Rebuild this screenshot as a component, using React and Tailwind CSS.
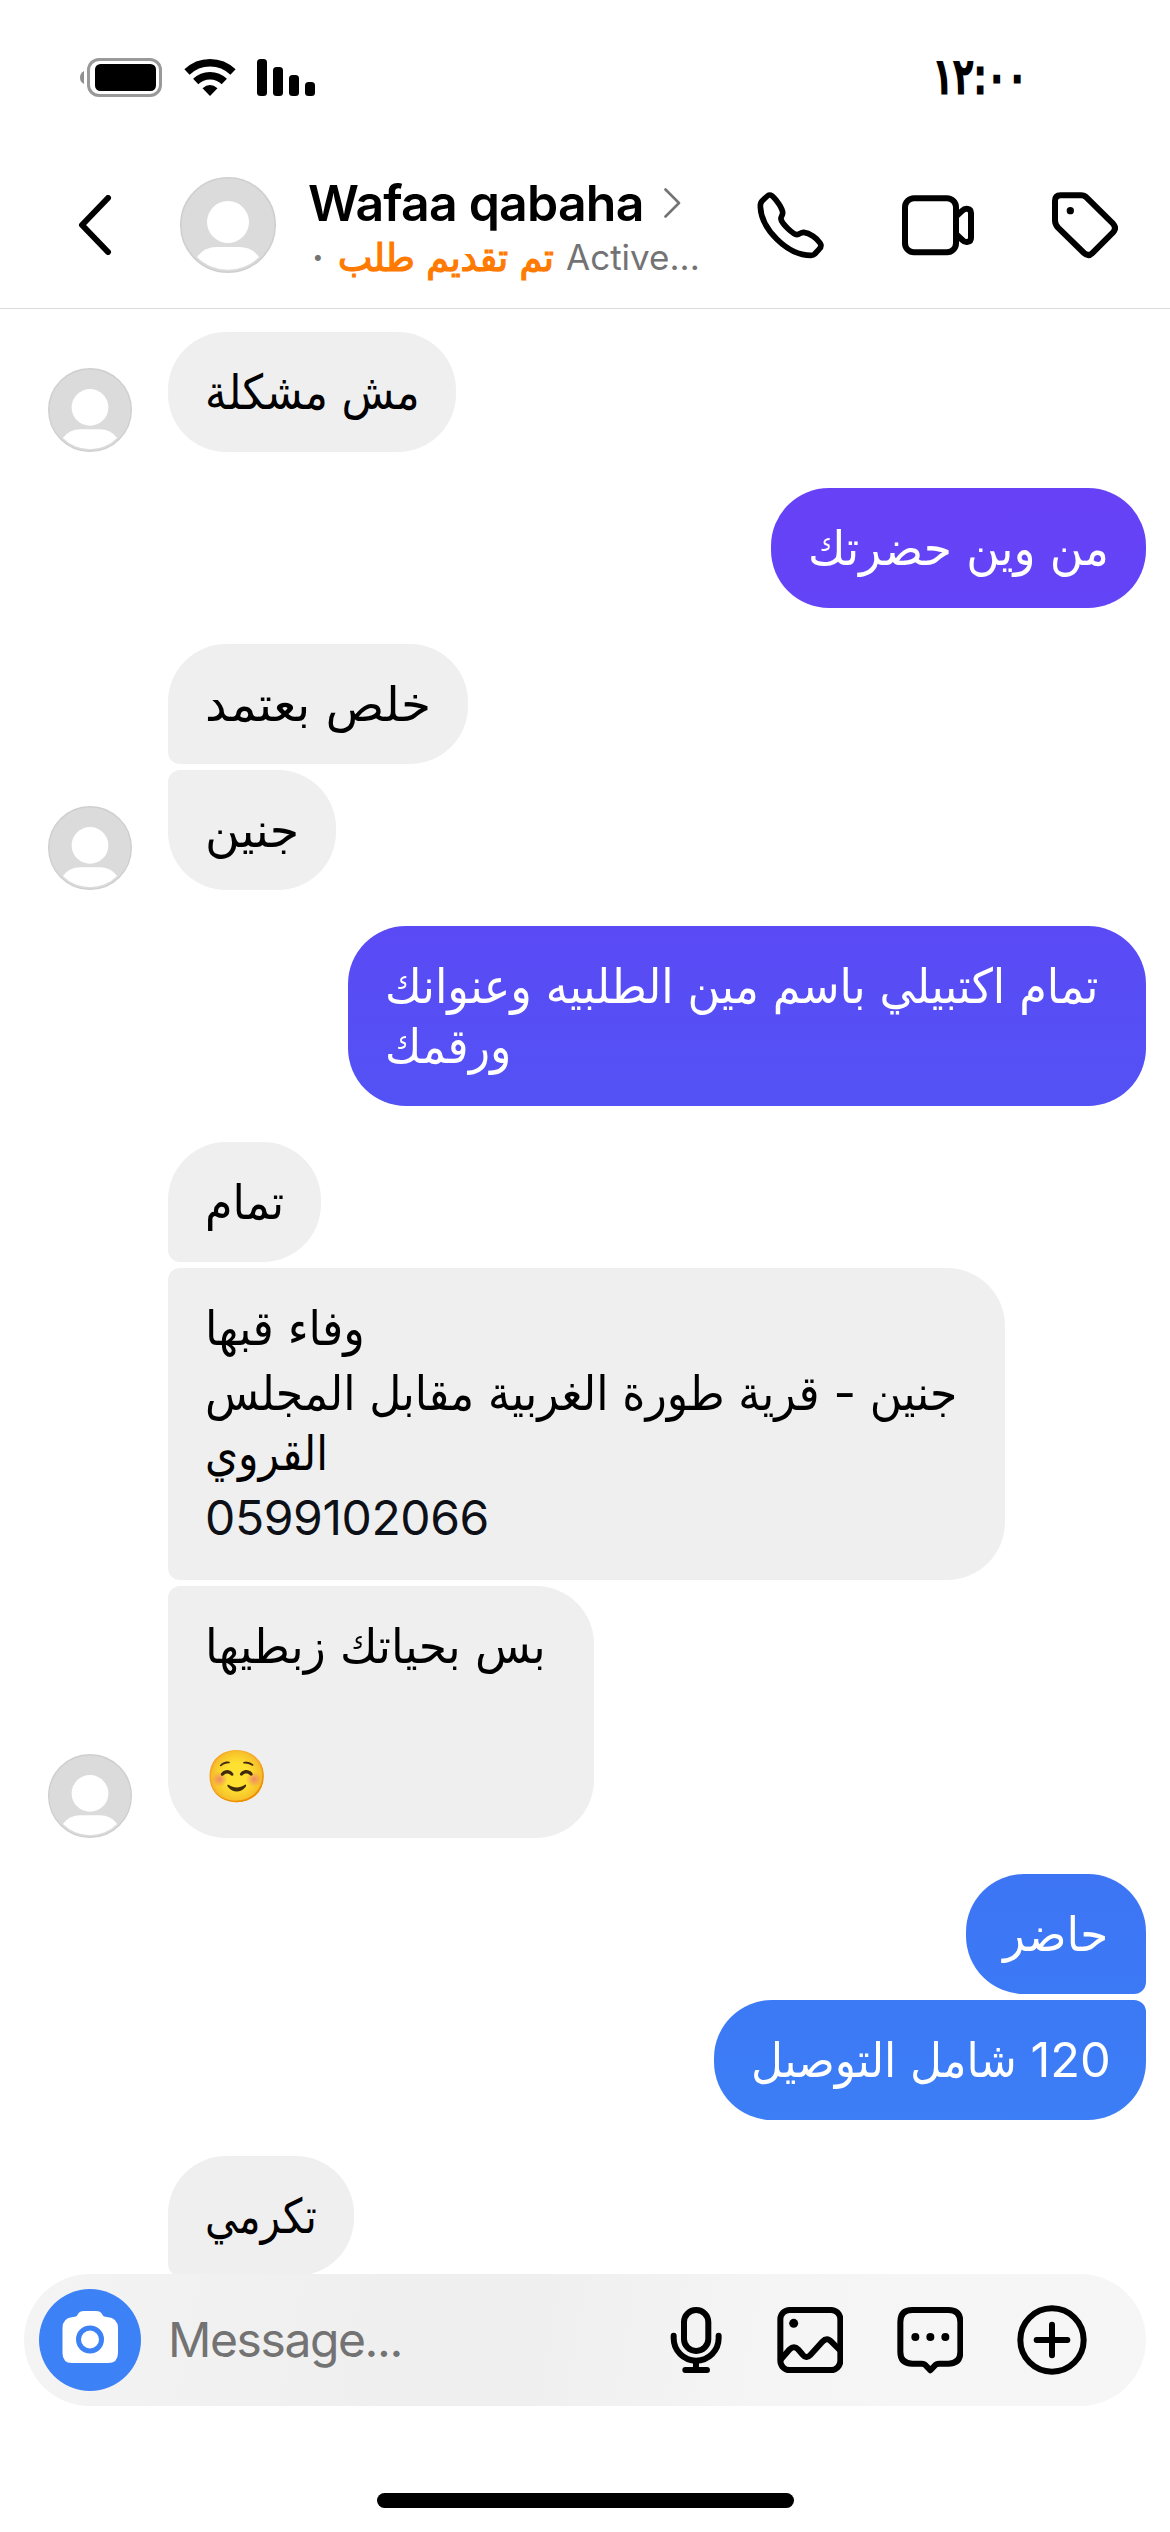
import clsx from 'clsx'

// `more` = the group goes on below the fold, so its last bubble keeps a tight corner
const THREAD = [
  { me: false, avatar: true, items: [
    { box: 'w-[288px] h-[120px]', lines: [{ t: 'مش مشكلة' }] },
  ] },
  { me: true, items: [
    { box: 'w-[375px] h-[120px] bg-linear-to-b from-[#6741f6] to-[#6344f6]', lines: [{ t: 'من وين حضرتك', fit: 'scale-x-[1.055]' }] },
  ] },
  { me: false, avatar: true, items: [
    { box: 'w-[300px] h-[120px]', lines: [{ t: 'خلص بعتمد', fit: 'scale-x-[1.125]' }] },
    { box: 'w-[168px] h-[120px]', lines: [{ t: 'جنين', fit: 'scale-x-[1.1]' }] },
  ] },
  { me: true, items: [
    { box: 'w-[798px] h-[180px] bg-linear-to-b from-[#5a4af5] to-[#5352f5]', lines: [
      { t: 'تمام اكتبيلي باسم مين الطلبيه وعنوانك', fit: 'scale-x-[1.031]' },
      { t: 'ورقمك', fit: 'scale-x-[1.02]' },
    ] },
  ] },
  { me: false, avatar: true, items: [
    { box: 'w-[153px] h-[120px]', lines: [{ t: 'تمام', fit: 'scale-x-[1.03]' }] },
    { box: 'w-[837px] h-[312px]', lines: [
      { t: 'وفاء قبها', cls: 'mb-[5px]', fit: 'scale-x-[1.03]' },
      { t: 'جنين - قرية طورة الغربية مقابل المجلس', fit: 'scale-x-[1.021]' },
      { t: 'القروي', cls: 'mb-[5px]', fit: 'scale-x-[0.98]' },
      { t: '0599102066', cls: 'text-[#0d1117] tracking-[-0.4px]' },
    ] },
    { box: 'w-[426px] h-[252px]', lines: [
      { t: 'بس بحياتك زبطيها', cls: 'mb-[70px]', fit: 'scale-x-[1.055]' },
      { t: '☺️', cls: 'text-[51px]' },
    ] },
  ] },
  { me: true, items: [
    { box: 'w-[180px] h-[120px] bg-linear-to-b from-[#3d75f5] to-[#3c79f5]', lines: [{ t: 'حاضر', fit: 'scale-x-[1.05]' }] },
    { box: 'w-[432px] h-[120px] bg-linear-to-b from-[#3c79f5] to-[#3c7ef6]', lines: [{ t: '120 شامل التوصيل', fit: 'scale-x-[1.016]' }] },
  ] },
  { me: false, more: true, items: [
    { box: 'w-[186px] h-[120px]', lines: [{ t: 'تكرمي', fit: 'scale-x-[0.94]' }] },
  ] },
]

function Avatar({ size }) {
  return (
    <svg viewBox="0 0 96 96" width={size} height={size} className="shrink-0">
      <circle cx="48" cy="48" r="47.2" fill="#dbdbdb" stroke="#cfcfcf" strokeWidth="1.6" />
      <circle cx="48" cy="45" r="21" fill="#fff" />
      <path d="M17 80Q24 70 37 70H59Q72 70 79 80A44 44 0 0 1 17 80Z" fill="#fff" />
    </svg>
  )
}

function Icon({ box, w, h, sw = 18, children }) {
  return (
    <svg viewBox={box} width={w} height={h} className="shrink-0" fill="none" stroke="#000"
      strokeWidth={sw} strokeLinecap="round" strokeLinejoin="round">
      {children}
    </svg>
  )
}

function StatusBar() {
  return (
    <div className="h-[141px] flex items-start justify-between pt-[57px] pl-[80px] pr-[143px]">
      <svg width="236" height="42" viewBox="80 57 236 42">
        <path d="M84 71Q80 73 80 77.500Q80 82 84 84Z" fill="#8f8f8f" />
        <rect x="88.500" y="59.500" width="72" height="36" rx="10.500" fill="none" stroke="#999" strokeWidth="3" />
        <rect x="95" y="64" width="61" height="27" rx="5.500" />
        <g fill="none" stroke="#000" strokeWidth="7.500">
          <path d="M187 72A33 33 0 0 1 233 72" />
          <path d="M195.700 81.500A20.500 20.500 0 0 1 224.300 81.500" />
        </g>
        <path d="M210 96L202.500 88.300Q210 81.500 217.500 88.300Z" />
        <rect x="257" y="59" width="10" height="37" rx="3.500" />
        <rect x="273" y="67" width="10" height="29" rx="3.500" />
        <rect x="289" y="75" width="10" height="21" rx="3.500" />
        <rect x="305" y="82" width="10" height="14" rx="3.500" />
      </svg>
      <p className="font-['DejaVu_Sans_Condensed','DejaVu_Sans',sans-serif] text-[48px] leading-[39px] tracking-[-5px] whitespace-nowrap origin-right scale-x-[0.88] [-webkit-text-stroke:3px_#000]">١٢:٠٠</p>
    </div>
  )
}

function Header() {
  return (
    <header className="h-[168px] flex items-start border-b border-[#dbdbdb] pl-[78px]">
      <div className="w-[102px] pt-[54px]">
        <Icon box="0 0 34 60" w="34" h="60" sw="6">
          <path d="M30 3L4 30L30 57" />
        </Icon>
      </div>
      <div className="pt-[36px]"><Avatar size={96} /></div>

      <div className="w-[481px] pl-[32px] pt-[32px]">
        <div className="flex items-center h-[60px]">
          <p className="w-[356px] text-[50px] font-semibold leading-[60px] tracking-[-0.8px] whitespace-nowrap">Wafaa qabaha</p>
          <Icon box="0 0 17 30" w="17" h="30" sw="2.600">
            <path d="M1.500 1.500L15 15L1.500 28.500" stroke="#737373" />
          </Icon>
        </div>
        <div className="flex items-center h-[48px] text-[35px] leading-[48px] whitespace-nowrap text-[#737373]">
          <span className="w-[30px] pl-[4px] font-bold">·</span>
          <span dir="rtl" className="w-[228px] origin-left scale-x-[1.065] text-left text-[#ff7a00] text-[38px] [-webkit-text-stroke:1.2px_#ff7a00]">تم تقديم طلب</span>
          <span>Active...</span>
        </div>
      </div>

      <div className="flex items-start pt-[51px]">
        <Icon box="50 65 200 200" w="66.700" h="66.700" sw="17">
          <path d="M88 74C84 74 82 76 66 91C61 95 60 102 60 108C62 175 140 255 212 255C217 255 220 254 223 251L236 237C242 231 243 224 239 218C230 204 208 188 190 186C182 185 178 193 170 193C158 192 124 160 122 146C121 138 128 134 127 126C125 112 108 88 96 77C93 75 91 74 88 74Z" />
        </Icon>
        <div className="ml-[78px]">
          <Icon box="483 65 216 200" w="72" h="66.700">
            <rect x="492" y="84" width="153" height="162" rx="27" />
            <path d="M648 136L664 121C672 112 690 113 690 128V202C690 217 672 218 664 209L648 194" />
          </Icon>
        </div>
        <div className="ml-[78px]">
          <Icon box="933 65 200 200" w="66.700" h="66.700">
            <path d="M942 92Q942 75 959 75H1020Q1030 75 1037 82L1116 160Q1128 173 1116 186L1054 248Q1042 260 1029 248L951 172Q942 163 942 150Z" />
            <circle cx="988" cy="121" r="11" fill="#000" stroke="none" />
          </Icon>
        </div>
      </div>
    </header>
  )
}

function Bubble({ item, me, first, last }) {
  return (
    <div className={clsx(
      'pt-[30px] px-[37px] rounded-[58px]', item.box,
      me ? 'text-white' : 'bg-[#efefef] text-black',
      me && !first && 'rounded-tr-[12px]',
      me && !last && 'rounded-br-[12px]',
      !me && !first && 'rounded-tl-[12px]',
      !me && !last && 'rounded-bl-[12px]',
    )}>
      {item.lines.map(l => (
        <p key={l.t} className={clsx('h-[60px] flex leading-[60px] whitespace-nowrap', l.cls)}>
          <span dir="rtl" className={clsx('origin-left', l.fit)}>{l.t}</span>
        </p>
      ))}
    </div>
  )
}

function Thread() {
  return (
    <main className="h-[1965px] overflow-hidden flex flex-col gap-[36px] pt-[23px] pl-[48px] pr-[24px] text-[48px]">
      {THREAD.map((g, i) => (
        <section key={i} className={clsx('flex items-end shrink-0', g.me && 'justify-end')}>
          {!g.me && <div className="w-[120px]">{g.avatar && <Avatar size={84} />}</div>}
          <div className={clsx('flex flex-col gap-[6px]', g.me && 'items-end')}>
            {g.items.map((it, n) => (
              <Bubble key={n} item={it} me={g.me} first={n === 0} last={!g.more && n === g.items.length - 1} />
            ))}
          </div>
        </section>
      ))}
    </main>
  )
}

function Composer() {
  return (
    <div className="mx-[24px] h-[132px] rounded-[66px] flex items-center pl-[15px] bg-[linear-gradient(100deg,#f4f4f4,#f1f1f1_18%,#efefef_34%,#efefef_45%,#f5f5f5_66%,#f6f6f6)]">
      <svg width="102" height="102" viewBox="0 0 102 102" className="shrink-0">
        <circle cx="51" cy="51" r="51" fill="#3c82f6" />
        <path d="M34 28Q38 28 39 25Q40.500 22 45 22H57Q61.500 22 63 25Q64 28 68 28Q79 29 79 39V64Q79 74 69 74H33Q23.500 74 23.500 64V39Q23.500 29 34 28Z" fill="#fff" />
        <circle cx="51" cy="50.500" r="11.500" fill="none" stroke="#3c82f6" strokeWidth="5" />
      </svg>
      <p className="w-[529px] pl-[27px] text-[48px] leading-[60px] tracking-[-1.4px] text-[#737373]">Message...</p>
      <div className="flex items-center gap-[53.300px]">
        <Icon box="60 75 160 210" w="53.300" h="70">
          <rect x="102" y="90" width="73" height="123" rx="36" />
          <path d="M71 167V175A67.500 67 0 0 0 206 175V167M138 242V266M106 270H171" />
        </Icon>
        <Icon box="380 75 200 210" w="66.700" h="70">
          <rect x="390" y="90" width="180" height="180" rx="28" />
          <path d="M392 238L418 208Q431 195 443 208L456 223Q468 238 480 225L516 185Q530 170 543 185L568 210" />
          <circle cx="430" cy="130" r="13.500" fill="#000" stroke="none" />
        </Icon>
        <Icon box="740 75 200 210" w="66.700" h="70">
          <path d="M786 90H894Q930 90 930 126V216Q930 251 894 251H866Q858 251 853 257L840 271L827 257Q822 251 814 251H786Q750 251 750 216V126Q750 90 786 90Z" />
          <g fill="#000" stroke="none">
            <circle cx="795" cy="171" r="12" />
            <circle cx="840" cy="171" r="12" />
            <circle cx="885" cy="171" r="12" />
          </g>
        </Icon>
        <Icon box="1095 75 210 210" w="70" h="70">
          <circle cx="1200" cy="180" r="95" />
          <path d="M1154 180H1246M1200 134V226" />
        </Icon>
      </div>
    </div>
  )
}

export default function App() {
  return (
    <div className="w-[1170px] h-[2532px] overflow-hidden bg-white text-black font-['Inter','DejaVu_Sans_Condensed','DejaVu_Sans',sans-serif]">
      <StatusBar />
      <Header />
      <Thread />
      <Composer />
      <div className="mt-[87px] mx-auto w-[417px] h-[15px] rounded-full bg-black" />
    </div>
  )
}
